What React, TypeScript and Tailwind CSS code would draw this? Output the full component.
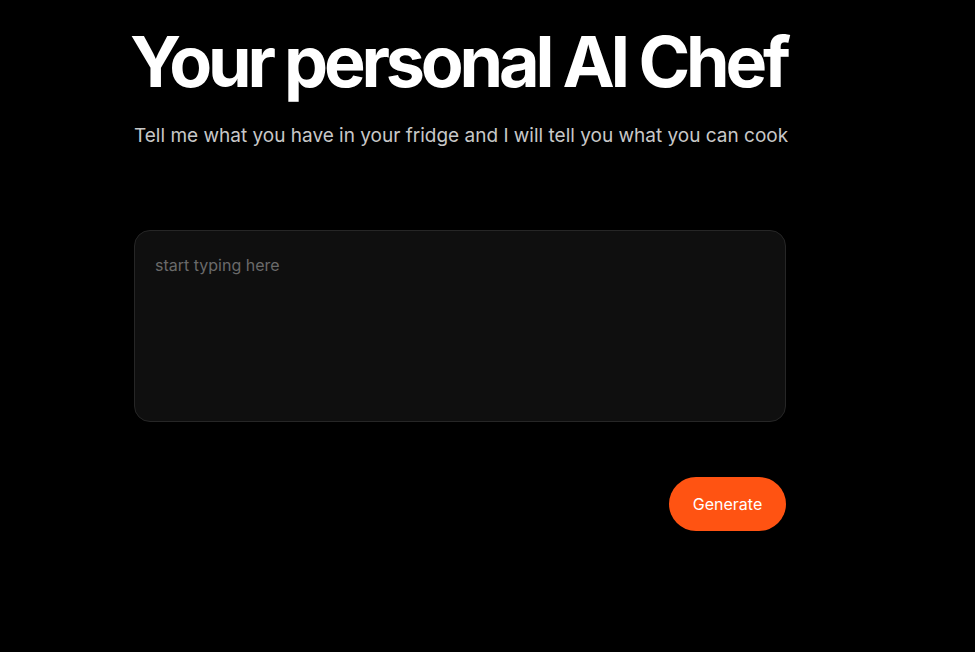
export default function App() {
  return (
    <div
      className="min-h-screen w-full bg-black text-white"
      style={{ fontFamily: "Inter, 'Noto Sans', sans-serif" }}
    >
      <div className="ml-[134px] w-[652px] pt-[22px]">
        <h1 className="-ml-[4px] whitespace-nowrap text-[70px] font-bold leading-[1.15] tracking-[-0.06em]">
          Your personal AI Chef
        </h1>
        <p className="mt-[19px] whitespace-nowrap text-[19px] text-[#c8c8c8]">
          Tell me what you have in your fridge and I will tell you what you can cook
        </p>

        <textarea
          placeholder="start typing here"
          className="mt-[80px] block h-[192px] w-full resize-none rounded-2xl border border-[#262626] bg-[#0f0f0f] px-5 pt-[22px] pb-6 text-base text-white outline-none placeholder:text-[#6a6a6a]"
        />

        <div className="mt-[55px] flex justify-end">
          <button className="h-[54px] w-[117px] rounded-full bg-[#ff5312] text-base text-white">
            Generate
          </button>
        </div>
      </div>
    </div>
  );
}
